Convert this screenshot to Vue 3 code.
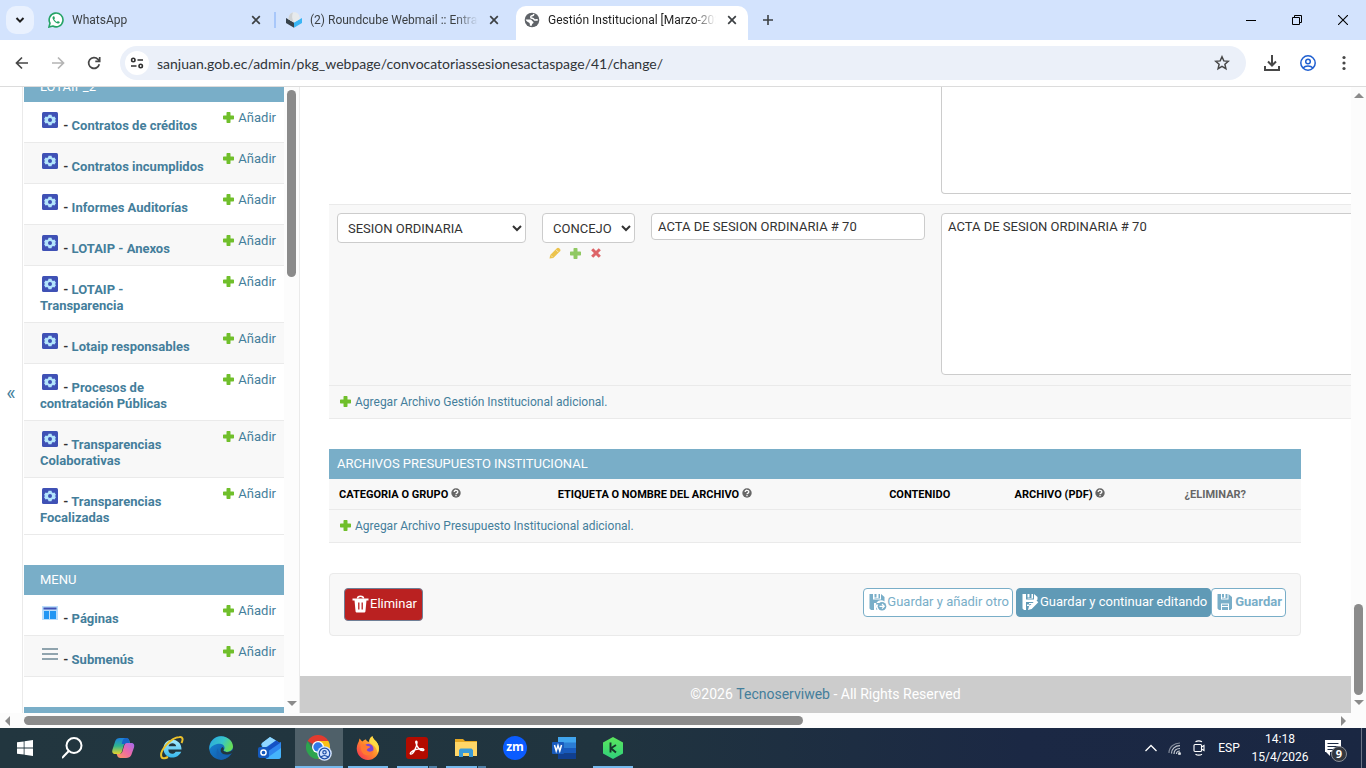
<script setup>
import { ref } from 'vue'

const transparency = [
  'Contratos de créditos',
  'Contratos incumplidos',
  'Informes Auditorías',
  'LOTAIP - Anexos',
  'LOTAIP - Transparencia',
  'Lotaip responsables',
  'Procesos de contratación Públicas',
  'Transparencias Colaborativas',
  'Transparencias Focalizadas',
]
const menu = [
  { name: 'Páginas', icon: 'page' },
  { name: 'Submenús', icon: 'lines' },
]
const sections = [
  { title: 'LOTAIP_2', items: transparency.map((name) => ({ name, icon: 'gear' })) },
  { title: 'MENU', items: menu },
]
const columns = [
  { label: 'CATEGORIA O GRUPO', help: true },
  { label: 'ETIQUETA O NOMBRE DEL ARCHIVO', help: true },
  { label: 'CONTENIDO' },
  { label: 'ARCHIVO (PDF)', help: true },
  { label: '¿ELIMINAR?', muted: true },
]
const url = ref('sanjuan.gob.ec/admin/pkg_webpage/convocatoriassesionesactaspage/41/change/')
const label = ref('ACTA DE SESION ORDINARIA # 70')
const content = ref('ACTA DE SESION ORDINARIA # 70')
const previous = ref('')
</script>

<template>
  <div class="desktop">
    <svg class="defs" aria-hidden="true">
      <defs>
        <linearGradient id="cpA" x1="0" y1="0" x2="0" y2="1"><stop offset="0" stop-color="#1b7fe0" /><stop offset=".5" stop-color="#2fb58e" /><stop offset="1" stop-color="#e8d32c" /></linearGradient>
        <linearGradient id="cpB" x1="1" y1="0" x2="0" y2="1"><stop offset="0" stop-color="#a36bf2" /><stop offset=".5" stop-color="#ef6aa5" /><stop offset="1" stop-color="#ff9a5a" /></linearGradient>
        <linearGradient id="edA" x1="0" y1="0" x2="1" y2=".4"><stop offset="0" stop-color="#2aa5e0" /><stop offset=".6" stop-color="#38c6c8" /><stop offset="1" stop-color="#65dd5a" /></linearGradient>
        <linearGradient id="edB" x1="0" y1="0" x2="1" y2="1"><stop offset="0" stop-color="#1a8ad8" /><stop offset="1" stop-color="#0c4fa0" /></linearGradient>
        <linearGradient id="ffA" x1="1" y1="0" x2="0" y2="1"><stop offset="0" stop-color="#ffe34d" /><stop offset=".5" stop-color="#ff8a2a" /><stop offset="1" stop-color="#f5245c" /></linearGradient>
        <linearGradient id="ieA" x1="0" y1="0" x2="0" y2="1"><stop offset="0" stop-color="#a9ecff" /><stop offset="1" stop-color="#35b8ee" /></linearGradient>
        <linearGradient id="olA" x1="0" y1="0" x2="1" y2="1"><stop offset="0" stop-color="#5cc6ff" /><stop offset="1" stop-color="#1a63d8" /></linearGradient>
        <linearGradient id="kA" x1="0" y1="0" x2="0" y2="1"><stop offset="0" stop-color="#5ce65c" /><stop offset="1" stop-color="#2fd07c" /></linearGradient>
        <symbol id="plus" viewBox="0 0 11 11"><path d="M4.200 0h2.600q.7 0 .7.700V3.500h2.800q.7 0 .7.700v2.600q0 .7-.7.700H7.500v2.800q0 .7-.7.700H4.200q-.7 0-.7-.7V7.500H.7Q0 7.500 0 6.800V4.200q0-.7.7-.7h2.800V.7q0-.7.7-.7z" /></symbol>
        <symbol id="close" viewBox="0 0 16 16"><path d="M4.200 4.200l7.600 7.600M11.800 4.200l-7.600 7.600" fill="none" stroke="currentColor" stroke-width="1.700" /></symbol>
      </defs>
    </svg>

    <header class="tabstrip">
      <button class="tab-search" aria-label="Buscar pestañas">
        <svg width="16" height="16" viewBox="0 0 16 16"><path d="M4.500 6l3.500 3.600L11.500 6" fill="none" stroke="#1f1f1f" stroke-width="2" /></svg>
      </button>
      <div class="tab">
        <svg width="16" height="16" viewBox="0 0 16 16">
          <path d="M1 15l1-3.800A6.900 6.900 0 1 1 4.800 14z" fill="#fff" stroke="#25a366" stroke-width="1.600" />
          <path d="M5.600 4.200c-.8.300-1.300 1.200-1 2.300.6 2.200 2.700 4.300 5 4.900 1.100.2 2-.4 2.200-1.500l-1.900-1-1 1c-1.200-.5-2.200-1.500-2.700-2.600l.8-1-.8-2z" fill="#25a366" />
        </svg>
        <span class="tab-title">WhatsApp</span>
        <button class="tab-close" aria-label="Cerrar"><svg width="16" height="16"><use href="#close" /></svg></button>
      </div>
      <span class="tab-sep"></span>
      <div class="tab">
        <svg width="16" height="16" viewBox="0 0 16 16">
          <path d="M8 15.800L0 11V6l8 4.500z" fill="#37424b" /><path d="M8 15.800l8-4.800V6l-8 4.500z" fill="#39b5f4" />
          <path d="M2.500 7.300C2.500 3 5 .3 8.300.3s5.500 2.700 5.500 6.800L8 10.500z" fill="#e7eaec" /><path d="M8 10.500L2.500 7.300C2.500 3.500 4.500 1 7 .5c-1.500 3-1 7 1 10z" fill="#cfd3d6" />
        </svg>
        <span class="tab-title">(2) Roundcube Webmail :: Entrada</span>
        <button class="tab-close" aria-label="Cerrar"><svg width="16" height="16"><use href="#close" /></svg></button>
      </div>
      <div class="tab active">
        <svg width="16" height="16" viewBox="0 0 16 16">
          <circle cx="8" cy="8" r="7.300" fill="#5f6368" />
          <path d="M9.600 1.800c.2 1.200-.5 1.900-1.700 2-1.400.1-1.200 1.400-.9 2 .4.800 2.300.1 2.700 1.200.3.900 1.400 1.300 2.600.8l1.500.3" fill="none" stroke="#fff" stroke-width="1.500" />
          <path d="M1.700 7.400l4.600.1c1.300.1 1.500 1.500 2.600 1.900 1 .4.700 1.700-.2 2.200-.8.500-.6 1.600-1.300 2.500l-1.600-.5c.2-1.500.1-2.400-1-3C3.300 9.900 2.100 8.700 1.700 7.400z" fill="#fff" />
        </svg>
        <span class="tab-title">Gestión Institucional [Marzo-2026]</span>
        <button class="tab-close" aria-label="Cerrar"><svg width="16" height="16"><use href="#close" /></svg></button>
      </div>
      <button class="new-tab" aria-label="Nueva pestaña"><svg width="12" height="12" viewBox="0 0 12 12"><path d="M6 1v10M1 6h10" stroke="#3c4043" stroke-width="1.600" /></svg></button>
      <div class="window-buttons">
        <button aria-label="Minimizar"><svg width="10" height="10" viewBox="0 0 10 10"><path d="M0 5.500h10" stroke="#000" /></svg></button>
        <button aria-label="Restaurar"><svg width="10" height="10" viewBox="0 0 10 10" fill="none" stroke="#000"><path d="M.5 2.500h7v7h-7zM2.500 2.500v-2h7v7h-2" /></svg></button>
        <button aria-label="Cerrar ventana"><svg width="10" height="10" viewBox="0 0 10 10"><path d="M0 0l10 10M10 0L0 10" stroke="#000" stroke-width="1.100" /></svg></button>
      </div>
    </header>

    <nav class="toolbar">
      <button aria-label="Atrás"><svg width="16" height="16" viewBox="0 0 16 16" fill="none" stroke="#474747" stroke-width="1.700"><path d="M14 8H3M8 2.500L2.500 8 8 13.500" /></svg></button>
      <button aria-label="Adelante"><svg width="16" height="16" viewBox="0 0 16 16" fill="none" stroke="#b4b4b4" stroke-width="1.700"><path d="M2 8h11M8 2.500l5.500 5.500L8 13.500" /></svg></button>
      <button aria-label="Recargar"><svg width="16" height="16" viewBox="0 0 16 16" fill="none" stroke="#474747" stroke-width="1.700"><path d="M13.300 9.300A5.400 5.400 0 1 1 12 4.300l1.300 1.500M13.700 2v4.300H9.300" /></svg></button>
      <div class="omnibox">
        <span class="site-info">
          <svg width="14" height="14" viewBox="0 0 14 14" fill="none" stroke="#303030" stroke-width="1.600"><circle cx="3.300" cy="4" r="1.700" /><path d="M7.500 4H13M1 10h5.500" /><circle cx="10.700" cy="10" r="1.700" /></svg>
        </span>
        <input v-model="url" class="url" aria-label="Dirección" />
        <button class="star" aria-label="Favorito"><svg width="16" height="16" viewBox="0 0 16 16"><path d="M8 1.800l1.800 4.100 4.500.4-3.400 3 1 4.400L8 11.400l-3.900 2.300 1-4.400-3.400-3 4.500-.4z" fill="none" stroke="#474747" stroke-width="1.500" /></svg></button>
      </div>
      <button aria-label="Descargas"><svg width="16" height="16" viewBox="0 0 16 16" fill="none" stroke="#474747" stroke-width="2"><path d="M8 0v10M4 6.500l4 4 4-4M1 11v4h14v-4" /></svg></button>
      <button aria-label="Perfil"><svg width="16" height="16" viewBox="0 0 16 16" fill="none" stroke="#1f5fd0" stroke-width="1.500"><circle cx="8" cy="8" r="7.200" /><circle cx="8" cy="6.500" r="2.300" /><path d="M3 13c2.500-2.700 7.500-2.700 10 0" /></svg></button>
      <button aria-label="Menú"><svg width="16" height="16" viewBox="0 0 16 16" fill="#474747"><circle cx="8" cy="2.500" r="1.600" /><circle cx="8" cy="8" r="1.600" /><circle cx="8" cy="13.500" r="1.600" /></svg></button>
    </nav>

    <div class="viewport">
      <div class="page">
        <button class="collapse" aria-label="Ocultar navegación">«</button>
        <aside class="sidebar">
          <div class="sidebar-list">
            <table v-for="(s, i) in sections" :key="s.title" class="module">
              <caption :class="{ cut: i === 0 }"><a href="#">{{ s.title }}</a></caption>
              <tbody>
                <tr v-for="item in s.items" :key="item.name">
                  <th scope="row">
                    <svg v-if="item.icon === 'gear'" class="model-icon" viewBox="0 0 20 20">
                      <rect x="2" y="2" width="16" height="16" rx="1.500" fill="#3f51b5" />
                      <path d="M8.500 4.700h3l.4 1.600 1 .6 1.600-.5 1.500 2.500-1.200 1.100 1.200 1.100-1.500 2.500-1.600-.5-1 .6-.4 1.600h-3l-.4-1.600-1-.6-1.600.5L4 11.100 5.200 10 4 8.900l1.500-2.500 1.600.5 1-.6z" fill="#b3e5fc" />
                      <circle cx="10" cy="10" r="2" fill="#3f51b5" />
                    </svg>
                    <svg v-else-if="item.icon === 'page'" class="model-icon" viewBox="0 0 20 20">
                      <path d="M2 3h16v14H2z" fill="#bbdefb" /><path d="M3.500 4.500h13v2h-13z" fill="#3f51b5" /><path d="M4 8h5v8H4zM10 8h6v8h-6z" fill="#2196f3" />
                    </svg>
                    <svg v-else class="model-icon" viewBox="0 0 20 20"><path d="M2 5h16M2 10h16M2 15h16" stroke="#90a4ae" stroke-width="2" /></svg>
                    - <a href="#">{{ item.name }}</a>
                  </th>
                  <td><a href="#"><svg class="plus" width="11" height="11"><use href="#plus" /></svg>Añadir</a></td>
                </tr>
              </tbody>
            </table>
            <div class="module-next"></div>
          </div>
          <div class="side-scroll">
            <span class="side-thumb"></span>
            <span class="arrow down"></span>
          </div>
        </aside>

        <main class="content">
          <div class="inline-group">
            <table class="inline-table">
              <colgroup><col class="c1" /><col class="c2" /><col class="c3" /><col /></colgroup>
              <tbody>
                <tr class="prev">
                  <td></td><td></td><td></td>
                  <td><textarea v-model="previous" aria-label="Contenido anterior"></textarea></td>
                </tr>
                <tr class="current">
                  <td><select class="wide" aria-label="Tipo de sesión"><option>SESION ORDINARIA</option></select></td>
                  <td>
                    <select class="wide" aria-label="Grupo"><option>CONCEJO</option></select>
                    <div class="related">
                      <a href="#" aria-label="Modificar"><svg width="12" height="12" viewBox="0 0 12 12"><path d="M.5 11.500l.7-3.600L7.600 1.400c1-1 1.900-.9 2.700-.1l.6.600c.8.800.8 1.700-.1 2.700l-6.500 6.300z" fill="#ecc34c" /><path d="M1.900 8.400l1.800 1.800M7 2.800l2.400 2.400" stroke="#f8f8f8" stroke-width=".6" /></svg></a>
                      <a href="#" aria-label="Añadir"><svg width="11" height="11" fill="#90c962"><use href="#plus" /></svg></a>
                      <a href="#" aria-label="Eliminar"><svg width="12" height="10" viewBox="0 0 12 10"><path d="M2.200 1.200l7.600 7.600M9.800 1.200L2.200 8.800" stroke="#dd6468" stroke-width="3" /></svg></a>
                    </div>
                  </td>
                  <td><input v-model="label" class="wide" type="text" aria-label="Etiqueta" /></td>
                  <td><textarea v-model="content" aria-label="Contenido"></textarea></td>
                </tr>
                <tr class="add-row"><td colspan="4"><a href="#"><svg class="plus" width="11" height="11"><use href="#plus" /></svg>Agregar Archivo Gestión Institucional adicional.</a></td></tr>
              </tbody>
            </table>
          </div>

          <section class="budget">
            <h2>ARCHIVOS PRESUPUESTO INSTITUCIONAL</h2>
            <table class="budget-table">
              <thead>
                <tr>
                  <th v-for="c in columns" :key="c.label" scope="col" :class="{ muted: c.muted }">
                    {{ c.label }}
                    <svg v-if="c.help" class="help" width="10" height="10" viewBox="0 0 10 10"><circle cx="5" cy="5" r="4.700" fill="#666" /><path d="M3.200 4c0-2.400 3.700-2.200 3.600 0C6.800 5.200 5 5 5 6.300M5 7v1.300" fill="none" stroke="#fff" stroke-width="1.300" /></svg>
                  </th>
                </tr>
              </thead>
              <tbody>
                <tr class="add-row"><td colspan="5"><a href="#"><svg class="plus" width="11" height="11"><use href="#plus" /></svg>Agregar Archivo Presupuesto Institucional adicional.</a></td></tr>
              </tbody>
            </table>
          </section>

          <div class="submit-row">
            <button class="btn delete">
              <svg width="18" height="18" viewBox="0 0 18 18"><path d="M.5 3.500h16v2H.5z" fill="#fff" /><path d="M5.500 3.500c0-3 6-3 6 0" fill="none" stroke="#fff" stroke-width="1.500" /><path d="M2.500 5h12l-1 11c-.1 1-.7 1.500-1.600 1.500H5.100C4.200 17.500 3.600 17 3.500 16z" fill="#fff" /><path d="M6.800 7.500v7M10.200 7.500v7" stroke="#ba2121" stroke-width="1.300" /></svg>Eliminar
            </button>
            <span class="spacer"></span>
            <button class="btn outline another">
              <svg width="18" height="18" viewBox="0 0 18 18" fill="#79aec8"><path d="M.5 1H4v5.500h8V1l3.500 3v4.500A5.200 5.200 0 0 0 8.600 16.500H7v-5h3V10H5v7H2L.5 15.500zM5.500 1h2v3.500h-2zM9.500 1H11v4.500H5.500V5h4z" /><circle cx="13" cy="13.300" r="4.300" /><path d="M10.500 13.300H15M13 11l2.300 2.300L13 15.600" fill="none" stroke="#fff" stroke-width="1.200" /></svg>Guardar y añadir otro
            </button>
            <button class="btn solid">
              <svg width="18" height="18" viewBox="0 0 18 18" fill="#fff"><path d="M.5 1H4v5.500h8V1l3.500 3v2.500L11 11H7v-1h4.500V9H4v8H2L.5 15.500zM5.500 1h2v3.500h-2zM9.500 1H11v4.500H5.500V5h4zM6 17l1-3.700L14 7l2.300 2.300-6.600 6.600zM5 11.500h2.500V13H5z" /></svg>Guardar y continuar editando
            </button>
            <button class="btn outline save">
              <svg width="18" height="18" viewBox="0 0 18 18" fill="#79aec8"><path d="M.5 1H4v5.500h7.500V1L15 4v11.500L13.500 17H12v-6.500H4V17H2L.5 15.500zM5 1h2v3.500H5zM8.500 1h2v4.500H5V5h3.500zM5 11.500h6V13H5zM5 14h6v3H5z" /></svg>Guardar
            </button>
          </div>

          <footer>©2026&nbsp;<a href="#">Tecnoserviweb</a>&nbsp;- All Rights Reserved</footer>
        </main>
        <div class="page-scroll">
          <span class="arrow up"></span>
          <span class="page-thumb"></span>
          <span class="arrow down"></span>
        </div>
      </div>
      <div class="bottom-scroll">
        <span class="arrow left"></span>
        <span class="bottom-track"><span class="bottom-thumb"></span></span>
        <span class="arrow right"></span>
      </div>
    </div>

    <div class="taskbar">
      <button aria-label="Inicio"><svg width="16" height="16" viewBox="0 0 16 16" fill="#fff"><path d="M0 2.300l6.700-.9v6.200H0zM7.500 1.300L16 0v7.600H7.500zM0 8.400h6.700v6.200L0 13.700zM7.500 8.400H16V16l-8.500-1.300z" /></svg></button>
      <button aria-label="Buscar"><svg width="24" height="24" viewBox="0 0 24 24" fill="none" stroke="#fff" stroke-width="2"><circle cx="12" cy="9.500" r="7.500" /><path d="M6.800 15L0 22" /></svg></button>
      <button aria-label="Copilot">
        <svg width="24" height="24" viewBox="0 0 24 24"><path d="M9 2h6c2 0 3 1 3.500 3l.6 2h-3c-2 0-3 .8-3.600 3l-1.600 5.500c-.6 2-1.400 2.500-3.400 2.500H4.500c-3 0-3.800-2-3-4.500L4.300 5C5 3 6.500 2 9 2z" fill="url(#cpA)" /><path d="M15 2c-3 0-3.500 3-4.300 6H19l-.7-3c-.5-2-1.300-3-3.300-3z" fill="#1764c9" /><path d="M15 22H9.500c-2 0-3-1-3.500-3l-.4-1H8c2 0 3-.8 3.600-3l1.600-5.500C13.800 7.500 15 7 17 7h3c3 0 3.700 2 3 4.500l-2.700 7.500c-.8 2-2.800 3-5.300 3z" fill="url(#cpB)" /></svg>
      </button>
      <button aria-label="Internet Explorer">
        <svg width="26" height="26" viewBox="0 0 26 26"><path d="M22.500 14.500H9.300c.1 5 5.700 5.400 7.300 2.200h5.600C18.500 25.500 4.500 24.500 4.500 13.500 4.500 1.500 22.700 1.600 22.500 14.500zM9.500 11.200h7.700c-.4-4-7.100-4-7.700 0z" fill="url(#ieA)" /><path d="M22.500 8c2-4 1-6.500-2-6C12 2.500 0 16 2.500 22c1 2.300 4.500 1 6.500 0" fill="none" stroke="#edc22b" stroke-width="2" /></svg>
      </button>
      <button aria-label="Edge">
        <svg width="24" height="24" viewBox="0 0 24 24"><circle cx="12" cy="12" r="11.800" fill="url(#edB)" /><path d="M.5 11C1.500 4.500 6.500.2 12 .2 19 .2 24 5.500 24 10.500c0 5.500-7.500 6.500-9.500 4.300 2.500-3 .5-7-3.500-7C6 7.700 2 10 .5 14z" fill="url(#edA)" /><path d="M14.500 14.800c2 2.200 6 1.800 8.700-.1-1 3.500-5 8.500-11.200 9-4-1.500-6-7.500-3-11.500 0 4.500 3 7 7 7 3 0 4-.5 5.500-1.500" fill="#1663b0" /><path d="M14.300 14.500c1.800 2.400 6.500 2.300 9.700-.7l-1.100 3.100c-3.200 2.200-9.200 2.500-10.900-.8-.8-2-.1-3.900 1.500-5.100 1.500 1 1.600 2.300.8 3.500z" fill="#22363f" /></svg>
      </button>
      <button aria-label="Outlook">
        <svg width="24" height="24" viewBox="0 0 24 24"><path d="M3 8l9-7 10 6v14c0 1-1 2-2 2H8z" fill="url(#olA)" /><path d="M4 7l8-6 6 3.500L5 13z" fill="#91d8ff" /><path d="M11 12L23 6v14c0 2-1 3-3 3H9z" fill="#2e86ee" /><path d="M5 14L18 4.500l4 2.500L9 16z" fill="#1551c4" /><path d="M9 22L23 12v8c0 2-1 3-3 3H9z" fill="#45b4fb" /><rect x="0" y="11" width="11" height="11" rx="2" fill="#1459bd" /><circle cx="5.500" cy="16.500" r="2.600" fill="none" stroke="#fff" stroke-width="1.500" /></svg>
      </button>
      <button class="open current-app" aria-label="Chrome">
        <svg width="26" height="26" viewBox="0 0 26 26"><path d="M12 12L1.600 6A12 12 0 0 1 22.400 6z" fill="#e33b2e" /><path d="M12 12h12A12 12 0 0 1 12 24l6-9z" fill="#fbc116" /><path d="M12 12H24a12 12 0 0 0-1.600-6H12z" fill="#fbc116" /><path d="M12 12L7 15 1.600 6A12 12 0 0 0 12 24l5-8z" fill="#2da44e" /><circle cx="12" cy="12" r="6" fill="#fff" /><circle cx="12" cy="12" r="4.700" fill="#3079e8" /><circle cx="18.500" cy="18.500" r="7.300" fill="#d3e3fd" /><g fill="none" stroke="#1d4fa8" stroke-width="1.200"><circle cx="18.500" cy="18.500" r="5.300" /><circle cx="18.500" cy="17.300" r="1.700" /><path d="M15 22c2-2 5-2 7 0" /></g></svg>
      </button>
      <button class="open" aria-label="Firefox">
        <svg width="24" height="24" viewBox="0 0 24 24"><path d="M2 7c1-1 1-3 1.500-4.500C5 4 5.500 5 6.500 5.500 8 4 9 3.500 10 3.500c.5 1.500 1.500 2 3 2.500C13 3 14.500 1 16.500.2 17 3.500 20 4.500 21.500 7.500 26 15 20 24 12 24S-2 15.500 2 7z" fill="url(#ffA)" /><path d="M16.500.2C17 3.500 20 4.500 21.500 7.500c2 3.500 1.500 7 0 9.500C21 11 17 9 14 7c-1-2 0-5.500 2.500-6.800z" fill="#ffdb45" /><circle cx="12.300" cy="13" r="5.200" fill="#7a45d8" /><path d="M5 9c2-1.500 5-.5 6 1 1.500 0 3 .3 3.200 1-.5 1.500-3 1-3.500 3 1.500 2.500 4.800 2 6.800 0-.5 5-5 6-8 5S4 14 5 9z" fill="#ff7a31" /></svg>
      </button>
      <button class="open multi" aria-label="Acrobat">
        <svg width="22" height="22" viewBox="0 0 22 22"><rect width="22" height="22" rx="3" fill="#b30b00" /><path d="M4.500 17c2.500 1 6.500-7.500 6.500-11.500 0-2-1.500-1.500-1.200 0 .7 4 4.200 8.500 7.200 8 1.500-.4 1-1.600-1-1.700-4-.1-9 1.700-11 3.500-.8.700-.9 1.400-.5 1.700z" fill="none" stroke="#fff" stroke-width="1.400" /></svg>
      </button>
      <button class="open multi" aria-label="Explorador de archivos">
        <svg width="22" height="20" viewBox="0 0 22 20"><path d="M0 1h8l2 2h12v5H0z" fill="#e5a823" /><path d="M0 4h22v14H0z" fill="#ffd667" /><path d="M4 19v-7l1.500-1.500h11L18 12v7h-4v-4H8v4z" fill="#3a9bd8" /></svg>
      </button>
      <button aria-label="Zoom"><span class="zoom-app">zm</span></button>
      <button aria-label="Word">
        <svg width="24" height="22" viewBox="0 0 24 22"><path d="M6 0h18v6H6z" fill="#41a5ee" /><path d="M6 5.500h18V11H6z" fill="#2b7cd3" /><path d="M6 11h18v5.500H6z" fill="#185abd" /><path d="M6 16.500h18V22H6z" fill="#103f91" /><rect y="5" width="12" height="12" rx="1" fill="#185abd" /><path d="M2.500 8l1.700 6L6 8.500 7.800 14l1.700-6" fill="none" stroke="#fff" stroke-width="1.500" /></svg>
      </button>
      <button class="open" aria-label="Kaspersky">
        <svg width="22" height="24" viewBox="0 0 22 24"><path d="M11 1l10 5.500v11L11 23 1 17.500v-11z" fill="url(#kA)" /><path d="M8.500 6.500v10M14 9l-5 3.300 5 4.200" fill="none" stroke="#17352c" stroke-width="1.900" /></svg>
      </button>
      <div class="tray">
        <button class="tray-icon" aria-label="Iconos ocultos"><svg width="12" height="8" viewBox="0 0 12 8"><path d="M.5 7L6 1.500 11.500 7" fill="none" stroke="#fff" stroke-width="1.300" /></svg></button>
        <button class="tray-icon" aria-label="Red"><svg width="14" height="14" viewBox="0 0 14 14" fill="none" stroke="#c3c8d0" stroke-width="1.200"><path d="M1 12C1 6 6 2 12 2" opacity=".6" /><path d="M3.500 12.500C3.500 8 7 4.700 12 4.700M6 13c0-3.500 2.500-5.500 6-5.500M8.500 13c0-1.800 1.500-3 3.500-3" /><circle cx="11.500" cy="12.500" r="1" fill="#fff" /></svg></button>
        <button class="tray-icon" aria-label="Reunirse ahora"><svg width="12" height="16" viewBox="0 0 12 16" fill="none" stroke="#fff" stroke-width="1.100"><rect x="1" y="4.500" width="7.500" height="7" rx="1" /><path d="M8.500 7l2.500-1.500v5L8.500 9M2.500 1.800c2-1.200 4.500-1.200 6.500 0M2.500 14.200c2 1.200 4.500 1.200 6.500 0" /></svg></button>
        <button class="lang">ESP</button>
        <div class="clock"><span>14:18</span><span>15/4/2026</span></div>
        <button class="notify" aria-label="Notificaciones">
          <svg width="16" height="16" viewBox="0 0 16 16"><path d="M0 0h16v12H5v4l-4-4H0z" fill="#fff" /><path d="M2.500 3.500h11M2.500 6.500h11M2.500 9.500h7" stroke="#1b2a43" /></svg>
          <span class="badge">9</span>
        </button>
        <span class="show-desktop"></span>
      </div>
    </div>
  </div>
</template>

<style>
body { margin: 0; overflow: hidden; }
</style>

<style scoped>
* { box-sizing: border-box; }
button { border: 0; padding: 0; margin: 0; background: none; font: inherit; color: inherit; }
a { color: #447e9b; text-decoration: none; }
svg { flex: none; }
.defs { position: absolute; width: 0; height: 0; }
.desktop { display: flex; flex-direction: column; height: 100vh; overflow: hidden; font-family: Roboto, "Liberation Sans", sans-serif; font-size: 13px; color: #333; background: #fff; }

.tabstrip { flex: none; display: flex; height: 40px; padding-left: 6px; background: #d3e3fd; font-size: 12px; color: #3c4043; }
.tab-search { display: grid; place-items: center; width: 28px; height: 28px; margin: 6px 6px 0 0; border-radius: 10px; background: #e9f1fe; }
.tab { display: flex; align-items: center; width: 232px; height: 34px; margin: 6px 6px 0 0; padding: 0 8px 6px; border-radius: 10px 10px 0 0; }
.tab.active { background: #fff; color: #1f1f1f; }
.tab-title { flex: 1; margin: 0 8px; overflow: hidden; white-space: nowrap; -webkit-mask-image: linear-gradient(90deg, #000 86%, transparent); mask-image: linear-gradient(90deg, #000 86%, transparent); }
.tab-close { display: grid; color: #3c4043; }
.tab-sep { width: 2px; height: 16px; margin: 12px 2px 0 -4px; background: #a8c7fa; }
.new-tab { display: grid; place-items: center; width: 28px; height: 28px; margin-top: 6px; }
.window-buttons { display: flex; margin-left: auto; }
.window-buttons button { display: grid; place-items: center; width: 46px; height: 40px; }

.toolbar { flex: none; display: flex; align-items: center; height: 47px; padding: 0 4px; border-bottom: 1px solid #dcdcdc; background: #fff; }
.toolbar > button { display: grid; place-items: center; width: 36px; height: 34px; }
.omnibox { flex: 1; display: flex; align-items: center; height: 34px; margin: 0 8px; padding: 0 16px 0 5px; border-radius: 17px; background: #ebf0f9; }
.site-info { display: grid; place-items: center; width: 24px; height: 24px; border-radius: 12px; background: #fff; }
.url { flex: 1; min-width: 0; margin: 0 8px; padding: 0; border: 0; background: none; font: 14px Lato, "Open Sans", sans-serif; color: #303438; }
.star { display: grid; }

.viewport { flex: 1; min-height: 0; display: flex; flex-direction: column; }
.page { flex: 1; min-height: 0; display: flex; overflow: hidden; }
.collapse { width: 23px; padding-bottom: 14px; border-right: 1px solid #eaeaea; font-size: 20px; line-height: 20px; color: #447e9b; }
.sidebar { display: flex; width: 277px; padding-left: 1px; border-right: 1px solid #eaeaea; overflow: hidden; }
.sidebar-list { width: 260px; }
.module { width: 100%; margin-bottom: 30px; border-collapse: collapse; }
.module caption { height: 30px; padding-left: 16px; background: #79aec8; font-size: 13px; font-weight: 400; line-height: 30px; text-align: left; }
.module caption.cut { height: 15px; line-height: 0; overflow: hidden; }
.module caption a { color: #fff; }
.module th, .module td { padding: 8px 0 8px 16px; border-bottom: 1px solid #eaeaea; font-size: 13px; line-height: 16px; text-align: left; vertical-align: top; }
.module th { font-weight: 700; }
.module td { padding: 8px 8px 8px 16px; white-space: nowrap; text-align: right; }
.module tr:nth-child(even) { background: #f8f8f8; }
.model-icon { width: 20px; height: 20px; vertical-align: baseline; }
.module-next { height: 30px; background: #79aec8; }
.plus { margin-right: 4px; fill: #70bf2b; vertical-align: -1px; }
.side-scroll { display: flex; flex-direction: column; align-items: center; justify-content: space-between; width: 15px; padding: 3px 0 7px; background: #fcfcfc; }
.side-thumb { width: 9px; height: 187px; border-radius: 5px; background: #8b8b8b; }
.arrow { width: 0; height: 0; border: 5px solid transparent; }
.arrow.down { border-top-color: #8b8b8b; border-bottom: 0; }
.arrow.up { border-bottom-color: #8b8b8b; border-top: 0; }
.arrow.left { border-right-color: #8b8b8b; border-left: 0; }
.arrow.right { border-left-color: #8b8b8b; border-right: 0; }

.content { flex: 1; min-width: 0; overflow: hidden; display: flex; flex-direction: column; }
.inline-group { margin-left: 29px; overflow: hidden; }
.inline-table { width: 1230px; border-collapse: collapse; table-layout: fixed; }
.c1 { width: 205px; }
.c2 { width: 109px; }
.c3 { width: 290px; }
.inline-table td { padding: 8px; vertical-align: top; border-bottom: 1px solid #eaeaea; }
.inline-table .prev td { padding-top: 0; }
.inline-table .current { background: #f8f8f8; }
.wide { width: 100%; }
select, input[type="text"], textarea { border: 1px solid #ccc; border-radius: 4px; background: #fff; color: #333; font: 13px/16px Roboto, "Liberation Sans", sans-serif; }
select { display: block; height: 30px; padding: 5px 6px; }
input[type="text"] { display: block; height: 27px; padding: 5px 6px; }
textarea { display: block; width: 610px; height: 162px; margin-bottom: 2px; padding: 5px 6px; resize: none; }
.prev textarea { height: 107px; border-top: 0; border-radius: 0 0 4px 4px; }
.related { display: flex; align-items: center; gap: 9px; padding: 4px 7px; }
.related a { display: grid; }
.inline-table .add-row td, .budget-table .add-row td { padding: 8px 11px; border-bottom: 1px solid #eaeaea; background: #f8f8f8; font-size: 12px; line-height: 16px; }

.budget { margin: 30px 50px 0 29px; }
.budget h2 { margin: 0; padding: 0 8px; background: #79aec8; color: #fff; font-size: 13px; font-weight: 400; line-height: 30px; }
.budget-table { width: 100%; border-collapse: collapse; table-layout: fixed; }
.budget-table th { padding: 8px 10px 6px; border-bottom: 1px solid #eaeaea; background: #f8f8f8; color: #000; font-size: 11px; font-weight: 700; line-height: 16px; text-align: left; white-space: nowrap; }
.budget-table th:nth-child(1) { width: 22.5%; }
.budget-table th:nth-child(2) { width: 34.1%; }
.budget-table th:nth-child(3) { width: 12.9%; }
.budget-table th:nth-child(4) { width: 17.5%; }
.budget-table th.muted { color: #666; }
.help { vertical-align: 0; }

.submit-row { display: flex; align-items: flex-start; margin: 30px 50px 0 29px; padding: 14px; border: 1px solid #eaeaea; border-radius: 4px; background: #f8f8f8; }
.spacer { flex: 1; }
.btn { display: flex; align-items: center; height: 29px; padding: 0 3px 2px 5px; border: 1px solid #79aec8; border-radius: 4px; font-size: 13px; white-space: nowrap; }
.btn.delete { height: 33px; padding: 0 5px 2px 7px; background: #ba2121; border-color: #6f7f96; color: #fff; }
.btn.outline { background: #fff; color: #79aec8; }
.btn.another { margin-right: 3px; }
.btn.solid { background: #609ab6; border-color: #609ab6; color: #fff; }
.btn.save { font-weight: 700; }

footer { display: flex; align-items: center; justify-content: center; height: 37px; margin-top: auto; padding-bottom: 2px; background: #ccc; color: #fff; font-size: 14px; }

.page-scroll { display: flex; flex-direction: column; align-items: center; width: 15px; padding: 6px 0 8px; background: #fcfcfc; }
.page-thumb { width: 9px; height: 91px; margin: auto 0 5px; border-radius: 5px; background: #8b8b8b; }
.bottom-scroll { flex: none; display: flex; align-items: center; height: 15px; padding: 0 20px 0 5px; background: #fcfcfc; }
.bottom-track { flex: 1; margin: 0 18px 0 14px; }
.bottom-thumb { display: block; width: 60%; height: 9px; border-radius: 5px; background: #8b8b8b; }

.taskbar { flex: none; display: flex; height: 40px; padding-left: 1px; background: linear-gradient(90deg, #22363f 0%, #20343f 45%, #1b2844 75%, #1a2742 100%); color: #fff; }
.taskbar > button { position: relative; display: grid; place-items: center; width: 48px; margin-right: 1px; }
.open::after { content: ""; position: absolute; bottom: 0; left: 4px; right: 4px; height: 2px; background: #76b9ed; }
.current-app { background: #4f6069; }
.current-app::after { left: 0; right: 0; }
.multi::after { background: linear-gradient(90deg, #76b9ed 31px, #22363f 31px 32px, #4f7fa6 32px); }
.zoom-app { width: 24px; height: 24px; border-radius: 12px; background: #0b5cff; font: 700 12px/22px "Open Sans", sans-serif; text-align: center; }
.tray { display: flex; align-items: center; margin-left: auto; font-size: 12px; }
.tray-icon { display: grid; place-items: center; width: 24px; height: 40px; }
.lang { width: 36px; }
.clock { display: flex; flex-direction: column; align-items: center; width: 66px; line-height: 18px; }
.notify { position: relative; display: grid; place-items: center; width: 40px; height: 40px; }
.badge { position: absolute; left: 18px; top: 18px; width: 16px; height: 16px; border: 1px solid #8a8f98; border-radius: 8px; background: #33373e; font: 700 11px/14px "Open Sans", sans-serif; text-align: center; }
.show-desktop { width: 5px; height: 40px; margin-left: 8px; border-left: 1px solid #6b7486; }
</style>
